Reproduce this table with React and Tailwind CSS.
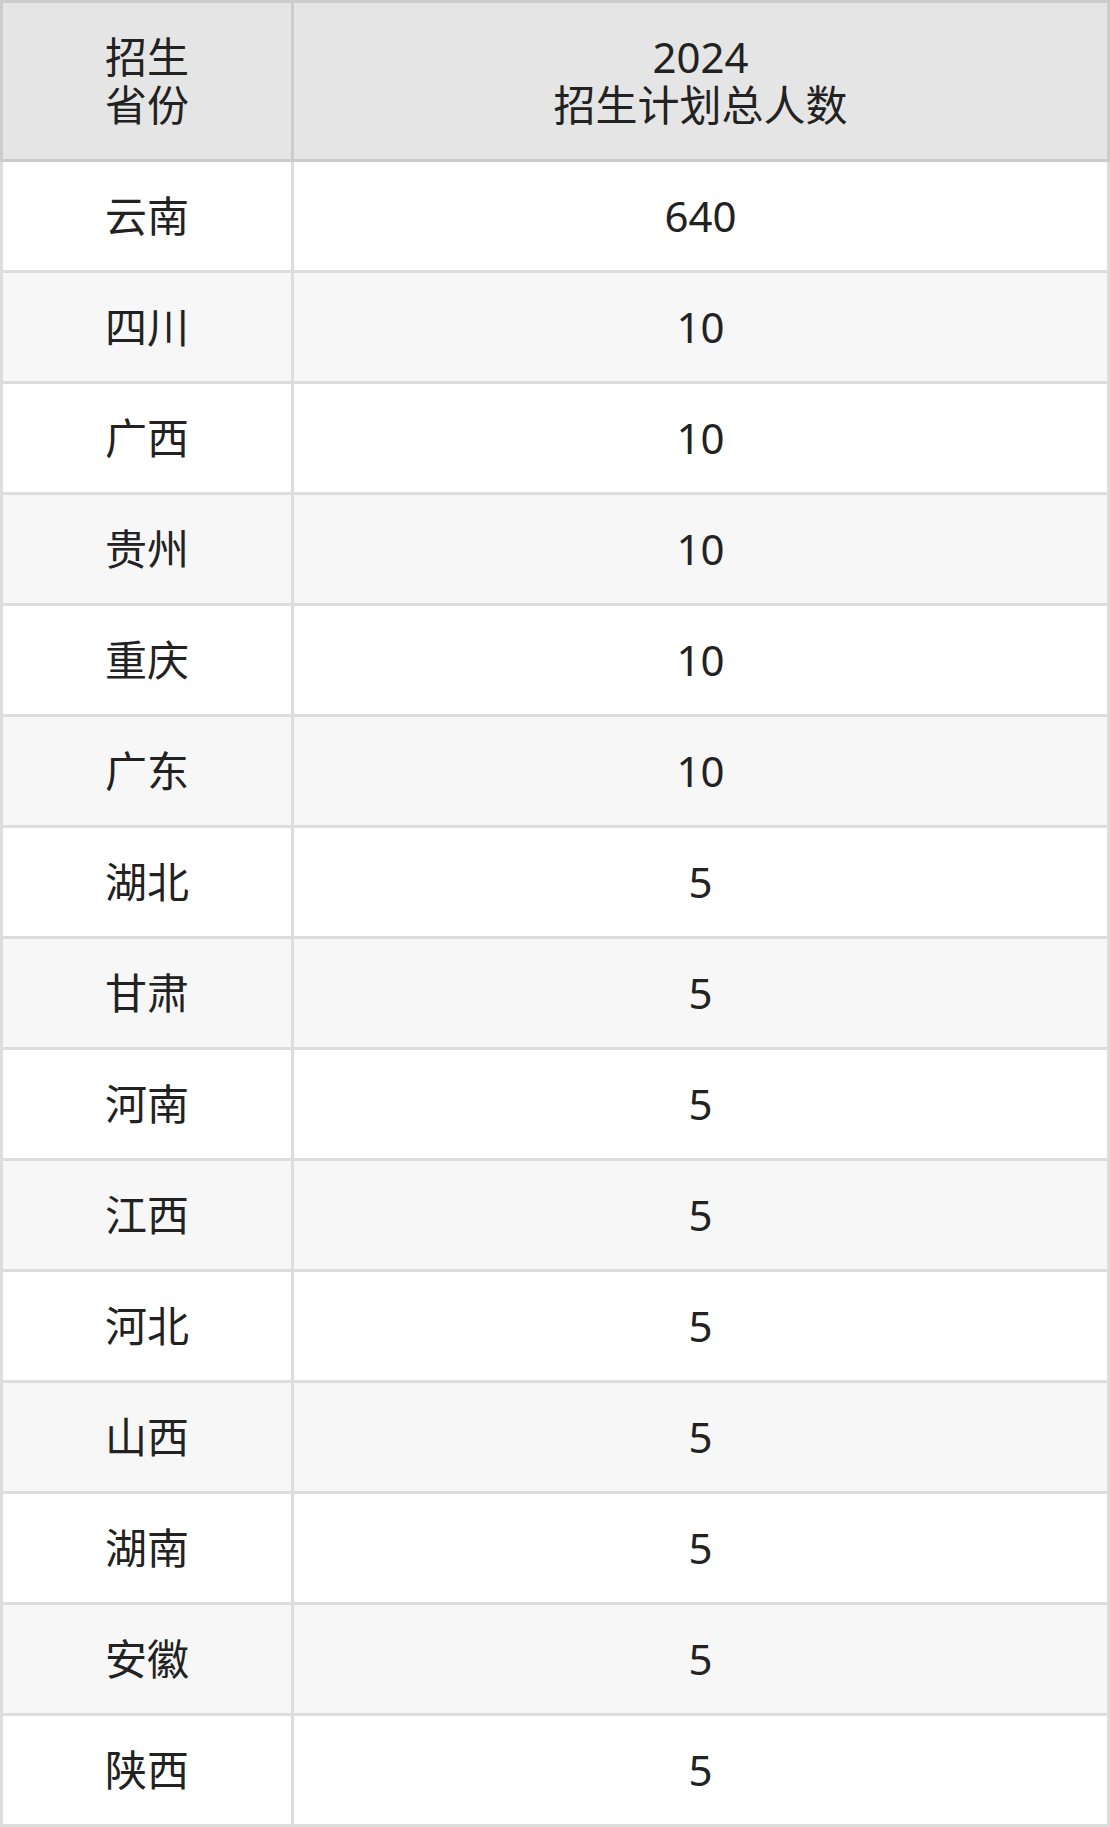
const rows = [
  ["云南", "640"],
  ["四川", "10"],
  ["广西", "10"],
  ["贵州", "10"],
  ["重庆", "10"],
  ["广东", "10"],
  ["湖北", "5"],
  ["甘肃", "5"],
  ["河南", "5"],
  ["江西", "5"],
  ["河北", "5"],
  ["山西", "5"],
  ["湖南", "5"],
  ["安徽", "5"],
  ["陕西", "5"],
];

export default function App() {
  return (
    <div
      className="w-[1110px] bg-white text-[#222222] text-[42px] leading-[48px]"
      style={{ fontFamily: '"Noto Sans", "Noto Sans CJK SC", sans-serif' }}
    >
      <div className="flex border-[3px] border-[#cccccc] bg-[#e5e5e5]">
        <div className="w-[291px] shrink-0 border-r-[3px] border-[#cccccc] py-[30px] flex flex-col items-center justify-center text-center">
          <div>招生</div>
          <div>省份</div>
        </div>
        <div className="flex-1 py-[30px] flex flex-col items-center justify-center text-center">
          <div>2024</div>
          <div>招生计划总人数</div>
        </div>
      </div>
      {rows.map(([p, n], i) => (
        <div
          key={p + i}
          className={
            "flex border-[3px] border-t-0 border-[#dddddd] " +
            (i % 2 === 0 ? "bg-white" : "bg-[#f7f7f7]")
          }
        >
          <div className="w-[291px] shrink-0 border-r-[3px] border-[#dddddd] py-[30px] text-center">
            {p}
          </div>
          <div className="flex-1 py-[30px] text-center">{n}</div>
        </div>
      ))}
    </div>
  );
}
